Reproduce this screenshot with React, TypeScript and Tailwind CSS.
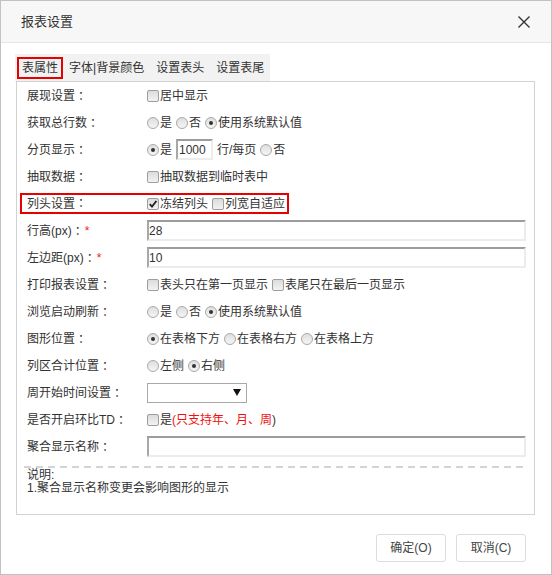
import React from "react";

const Radio = ({ checked }: { checked?: boolean }) => (
  <span className="relative inline-block w-[12px] h-[12px] shrink-0 rounded-full border border-[#a9a9a9] bg-[linear-gradient(#dedede,#f5f5f5)] mr-[1px]">
    {checked && (
      <span className="absolute left-[3px] top-[3px] w-[4px] h-[4px] rounded-full bg-[#333]" />
    )}
  </span>
);

const Check = ({ checked }: { checked?: boolean }) => (
  <span className="relative inline-block w-[12px] h-[12px] shrink-0 rounded-[2px] border border-[#9e9e9e] bg-[linear-gradient(#dcdcdc,#f2f2f2)] mr-[1px]">
    {checked && (
      <svg className="absolute left-0 top-0" width="10" height="10" viewBox="0 0 10 10">
        <path d="M1.8 5.2 L4 7.6 L8.4 2" fill="none" stroke="#222" strokeWidth="1.9" />
      </svg>
    )}
  </span>
);

const Opt = ({
  type,
  checked,
  children,
  last,
}: {
  type: "r" | "c";
  checked?: boolean;
  children: React.ReactNode;
  last?: boolean;
}) => (
  <span className={`flex items-center ${last ? "" : "mr-[4px]"}`}>
    {type === "r" ? <Radio checked={checked} /> : <Check checked={checked} />}
    <span>{children}</span>
  </span>
);

const Colon = () => (
  <span className="font-[family-name:'Noto_Sans_CJK_TC',sans-serif]">：</span>
);

const Row = ({
  label,
  req,
  children,
}: {
  label: React.ReactNode;
  req?: boolean;
  children?: React.ReactNode;
}) => (
  <div className="flex items-center h-[27px] pl-[10px]">
    <div className="w-[120px] shrink-0 flex items-center">
      <span>{label}</span>
      <Colon />
      {req && <span className="text-[#f02020] ml-[1px]">*</span>}
    </div>
    <div className="flex items-center">{children}</div>
  </div>
);

const inset =
  "border-2 border-t-[#9c9c9c] border-l-[#a8a8a8] border-r-[#ececec] border-b-[#ececec] bg-white";

export default function App() {
  return (
    <div className="w-[552px] h-[575px] border border-[#c2c2c2] bg-white flex flex-col text-[12px] leading-[16px] text-[#333] font-[family-name:'Liberation_Sans','Noto_Sans_CJK_SC',sans-serif]">
      {/* header */}
      <div className="h-[42px] shrink-0 bg-[#f7f7f7] border-b border-[#e6e6e6] flex items-center justify-between pl-[20px] pr-[20px]">
        <span className="text-[13px] text-[#333]">报表设置</span>
        <svg width="14" height="14" viewBox="0 0 14 14">
          <path d="M1.5 1.5 L12.5 12.5 M12.5 1.5 L1.5 12.5" stroke="#333" strokeWidth="1.4" />
        </svg>
      </div>

      {/* body */}
      <div className="flex flex-col pl-[15px] pt-[11px]">
        <div className="flex items-center h-[27px] w-fit bg-[#f2f2f2] pl-[2px] -ml-[1px]">
          <div className="h-[22px] border-2 border-[#e60000] px-[3px] flex items-center">表属性</div>
          <div className="px-[6px]">字体|背景颜色</div>
          <div className="px-[6px]">设置表头</div>
          <div className="px-[6px]">设置表尾</div>
        </div>

        <div className="w-[519px] h-[434px] border border-[#d2d2d2] flex flex-col">
          <Row label="展现设置">
            <Opt type="c" last>居中显示</Opt>
          </Row>
          <Row label="获取总行数">
            <Opt type="r">是</Opt>
            <Opt type="r">否</Opt>
            <Opt type="r" checked last>使用系统默认值</Opt>
          </Row>
          <Row label="分页显示">
            <Opt type="r" checked>是</Opt>
            <span className={`w-[37px] h-[21px] flex items-center pl-[1px] mr-[4px] ${inset}`}>1000</span>
            <span className="mr-[4px]">行/每页</span>
            <Opt type="r" last>否</Opt>
          </Row>
          <Row label="抽取数据">
            <Opt type="c" last>抽取数据到临时表中</Opt>
          </Row>
          <div className="flex items-center h-[27px] pl-[3px]">
            <div className="flex items-center h-[21px] border-2 border-[#e60000] pl-[5px] pr-[2px]">
              <div className="w-[120px] shrink-0">
                列头设置
                <Colon />
              </div>
              <Opt type="c" checked>冻结列头</Opt>
              <Opt type="c" last>列宽自适应</Opt>
            </div>
          </div>
          <Row label="行高(px)" req>
            <span className={`w-[379px] h-[21px] flex items-center ${inset}`}>28</span>
          </Row>
          <Row label="左边距(px)" req>
            <span className={`w-[379px] h-[21px] flex items-center ${inset}`}>10</span>
          </Row>
          <Row label="打印报表设置">
            <Opt type="c">表头只在第一页显示</Opt>
            <Opt type="c" last>表尾只在最后一页显示</Opt>
          </Row>
          <Row label="浏览启动刷新">
            <Opt type="r">是</Opt>
            <Opt type="r">否</Opt>
            <Opt type="r" checked last>使用系统默认值</Opt>
          </Row>
          <Row label="图形位置 ">
            <Opt type="r" checked>在表格下方</Opt>
            <Opt type="r">在表格右方</Opt>
            <Opt type="r" last>在表格上方</Opt>
          </Row>
          <Row label="列区合计位置">
            <Opt type="r">左侧</Opt>
            <Opt type="r" checked last>右侧</Opt>
          </Row>
          <Row label="周开始时间设置">
            <span className="w-[100px] h-[20px] border border-[#a9a9a9] bg-white flex items-center justify-end pr-[5px]">
              <svg width="8" height="7" viewBox="0 0 8 7">
                <path d="M0 0 L8 0 L4 7 Z" fill="#111" />
              </svg>
            </span>
          </Row>
          <Row label="是否开启环比TD">
            <Opt type="c" last>
              是<span className="text-[#f01010]">(只支持年、月、周</span>)
            </Opt>
          </Row>
          <Row label="聚合显示名称">
            <span className={`w-[379px] h-[21px] flex items-center ${inset}`}></span>
          </Row>
          <div className="ml-[7px] mr-[10px] h-[2px] mt-[6px] bg-[repeating-linear-gradient(to_right,#d4d4d4_0px,#d4d4d4_7px,transparent_7px,transparent_12px)]" />
          <div className="pl-[10px] mt-[1px] leading-[12.5px]">
            <div>说明:</div>
            <div>1.聚合显示名称变更会影响图形的显示</div>
          </div>
        </div>
      </div>

      {/* footer */}
      <div className="flex justify-end gap-[10px] pt-[19px] pr-[25px]">
        <button className="w-[70px] h-[28px] rounded-[3px] border border-[#dcdcdc] bg-white text-[12px] text-[#444]">确定(O)</button>
        <button className="w-[70px] h-[28px] rounded-[3px] border border-[#dcdcdc] bg-white text-[12px] text-[#444]">取消(C)</button>
      </div>
    </div>
  );
}
